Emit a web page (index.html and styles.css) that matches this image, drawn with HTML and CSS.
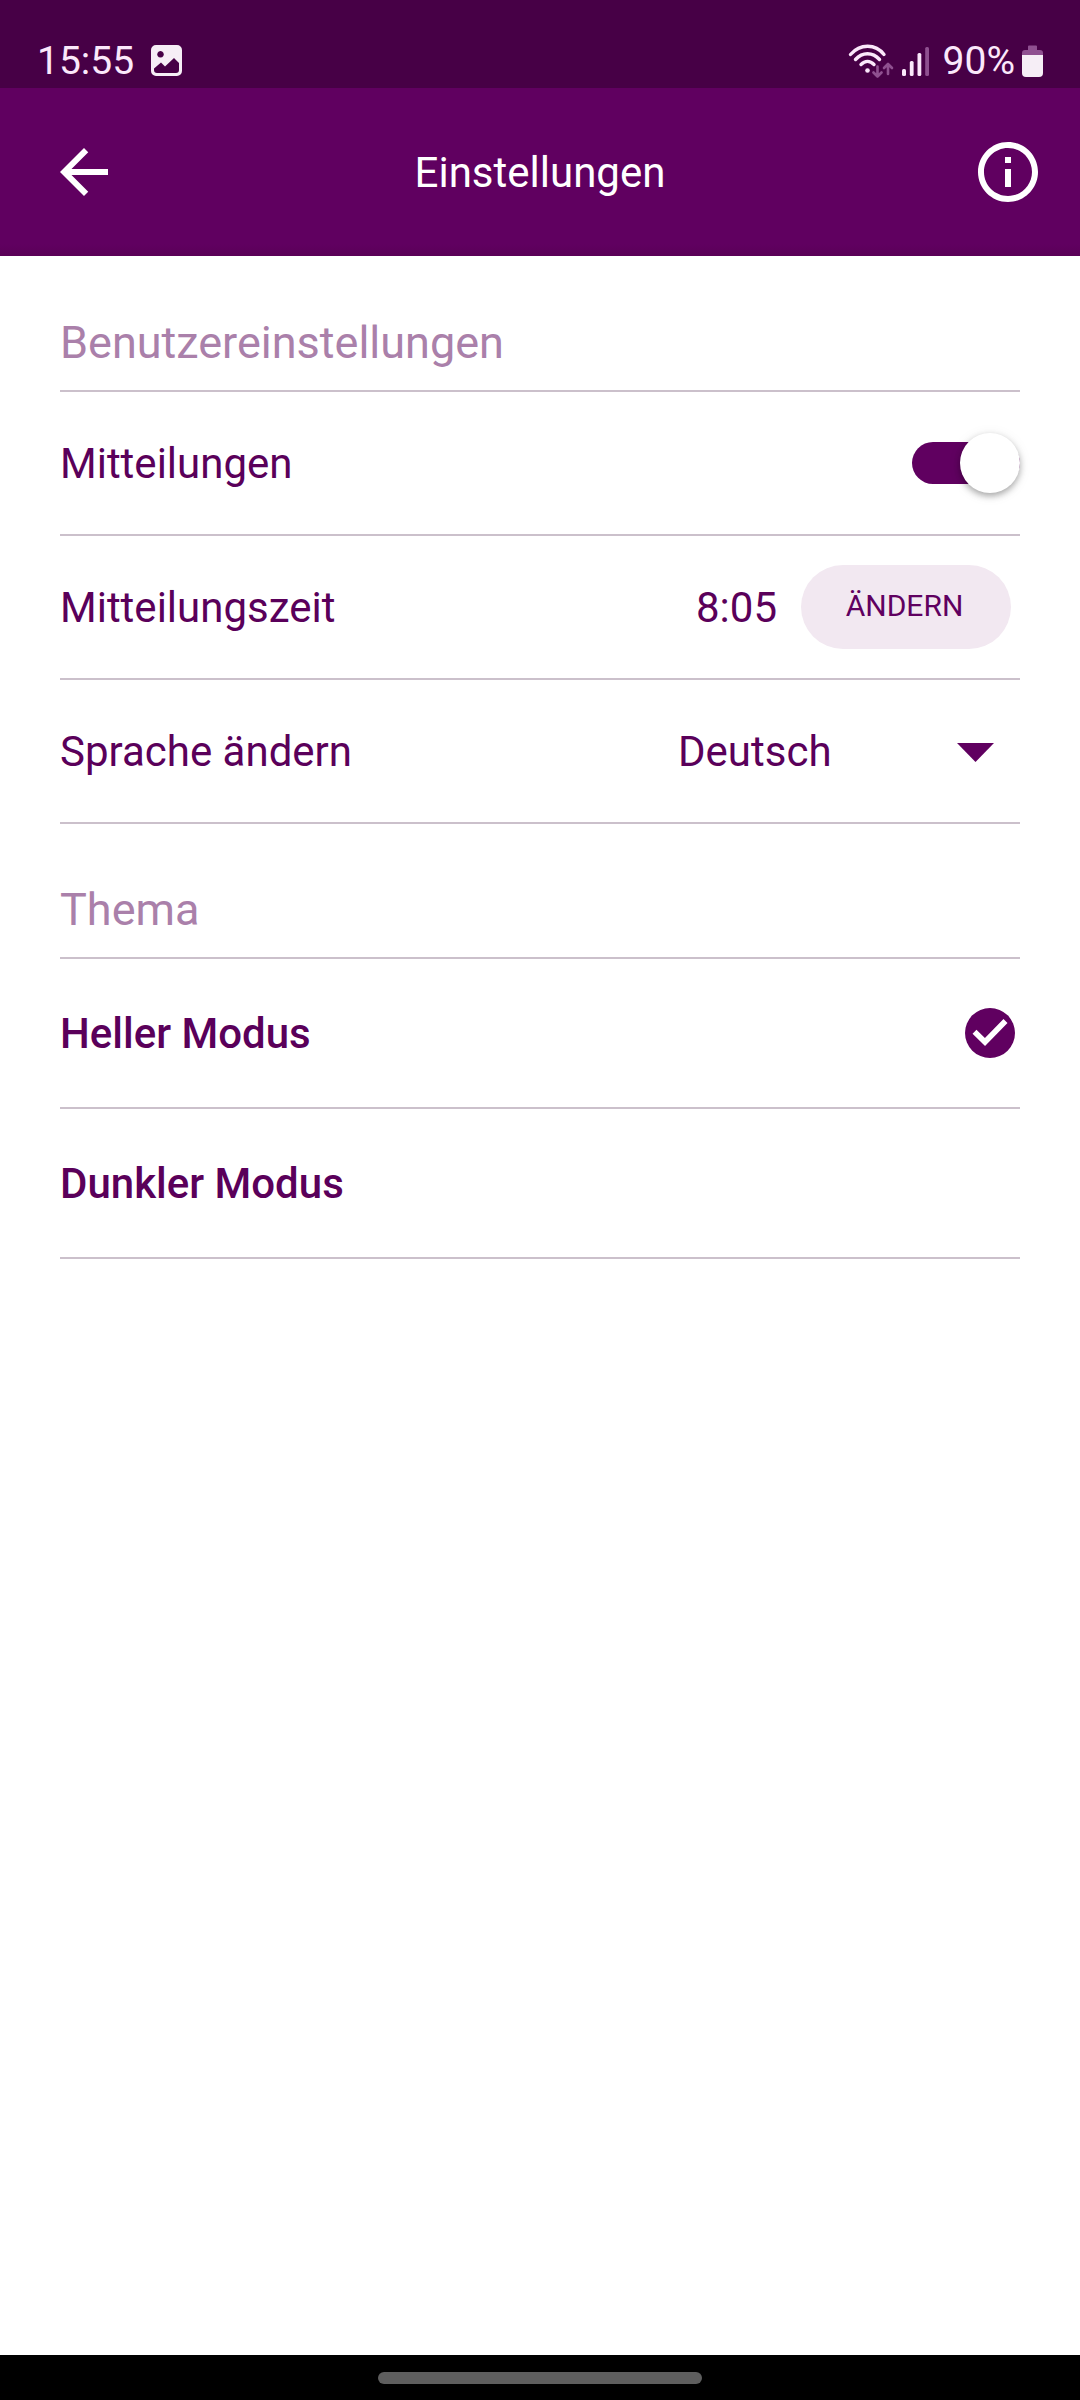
FILE: index.html
```html
<!DOCTYPE html>
<html lang="de">
<head>
    <meta charset="UTF-8">
    <meta name="viewport" content="width=device-width, initial-scale=1.0">
    <title>Einstellungen</title>
    <link rel="stylesheet" href="styles.css">
</head>
<body>

    <div class="statusbar">
        <span class="clock">15:55</span>
        <svg class="photo" viewBox="0 0 31 31">
            <path fill="#f6eef6" fill-rule="evenodd" d="M5 0h21a5 5 0 0 1 5 5v21a5 5 0 0 1-5 5H5a5 5 0 0 1-5-5V5a5 5 0 0 1 5-5zM9.500 6a3.300 3.300 0 1 0 .01 0zM3 23.500V25a3 3 0 0 0 3 3h19a3 3 0 0 0 3-3v-7l-5-5-9 8.500-4-4z"/>
        </svg>
        <div class="status-right">
            <svg class="wifi" viewBox="0 0 46 34">
                <g fill="none" stroke="#fbe8fb" stroke-width="3.400" stroke-linecap="round">
                    <path d="M2.500 10.500C12 -.5 27.500 -.5 36 10.500"/>
                    <path d="M7.500 15.500C14.500 7.800 24.500 7.800 31.500 15.500"/>
                    <path d="M13 20.500C17 16.500 22 16.500 26 20.500"/>
                </g>
                <circle cx="19.500" cy="26.500" r="2.300" fill="#fbe8fb"/>
                <g fill="none" stroke="#8f5090" stroke-width="2.600" stroke-linecap="round" stroke-linejoin="round">
                    <path d="M29.500 22.500v10M25.500 28.500l4 4 4-4"/>
                    <path d="M40 30V20M36 24l4-4 4 4"/>
                </g>
            </svg>
            <svg class="signal" viewBox="0 0 28 30">
                <g fill="#fbe8fb">
                    <rect x="0" y="23" width="4" height="7" rx="1.500"/>
                    <rect x="7.800" y="15" width="3.800" height="15" rx="1.500"/>
                    <rect x="15.500" y="7" width="3.800" height="23" rx="1.500"/>
                </g>
                <rect x="23.200" y="1" width="3.800" height="29" rx="1.500" fill="#8f5090"/>
            </svg>
            <span class="percent">90%</span>
            <svg class="battery" viewBox="0 0 21 32">
                <path fill="#8f5090" d="M6 1.500Q6 .5 7 .5h7q1 0 1 1V5h3q3 0 3 3v2H0V8q0-3 3-3h3z"/>
                <path fill="#f6eef6" d="M0 10h21v18q0 4-4 4H4q-4 0-4-4z"/>
            </svg>
        </div>
    </div>

    <header>
        <svg class="icon" viewBox="0 0 24 24" fill="#fff">
            <path d="M20 11H7.830l5.590-5.590L12 4l-8 8 8 8 1.410-1.410L7.830 13H20v-2z"/>
        </svg>
        <h1>Einstellungen</h1>
        <svg class="icon" viewBox="0 0 24 24" fill="#fff">
            <path d="M11 7h2v2h-2zm0 4h2v6h-2zm1-9C6.480 2 2 6.480 2 12s4.480 10 10 10 10-4.480 10-10S17.520 2 12 2zm0 18c-4.410 0-8-3.590-8-8s3.590-8 8-8 8 3.590 8 8-3.590 8-8 8z"/>
        </svg>
    </header>

    <main>
        <h2>Benutzereinstellungen</h2>
        <div class="row">
            <span>Mitteilungen</span>
            <div class="switch"><div class="thumb"></div></div>
        </div>
        <div class="row">
            <span>Mitteilungszeit</span>
            <div class="time">
                <span>8:05</span>
                <button>ÄNDERN</button>
            </div>
        </div>
        <div class="row">
            <span>Sprache ändern</span>
            <div class="select">
                <span>Deutsch</span>
                <svg class="caret" viewBox="0 0 37 19"><path fill="#600060" d="M0 0h37L18.500 19z"/></svg>
            </div>
        </div>

        <h2 class="theme">Thema</h2>
        <div class="row mode">
            <span>Heller Modus</span>
            <svg class="check" viewBox="0 0 50 50">
                <circle cx="25" cy="25" r="25" fill="#600060"/>
                <path d="M9.500 23.700L20 34 40.500 13" fill="none" stroke="#fff" stroke-width="5.600"/>
            </svg>
        </div>
        <div class="row mode">
            <span>Dunkler Modus</span>
        </div>
    </main>

    <div class="navbar"><div class="pill"></div></div>

</body>
</html>
```
FILE: styles.css
```css
* {
    box-sizing: border-box;
}
body {
    font-family: Roboto, sans-serif;
    font-size: 42px;
    background-color: #fff;
    color: #5a005a;
    display: flex;
    flex-direction: column;
    height: 2400px;
    margin: 0;
}
svg {
    display: block;
    flex-shrink: 0;
}
.statusbar {
    display: flex;
    align-items: center;
    height: 88px;
    padding: 33px 37px 0 37px;
    background-color: #470046;
    color: #fbe8fb;
    font-size: 39px;
    line-height: 55px;
}
.clock, .percent {
    padding-top: 1px;
}
.photo {
    width: 31px;
    height: 31px;
    margin-left: 17px;
}
.status-right {
    display: flex;
    align-items: center;
    margin-left: auto;
}
.wifi {
    width: 46px;
    height: 34px;
}
.signal {
    width: 28px;
    height: 30px;
    margin-left: 8px;
}
.percent {
    margin-left: 13px;
}
.battery {
    width: 21px;
    height: 32px;
    margin-left: 7px;
}
header {
    display: flex;
    align-items: center;
    height: 168px;
    padding: 0 36px 0 48px;
    background: linear-gradient(#600060 93%, #5a0057);
    color: #fff;
}
.icon {
    width: 72px;
    height: 72px;
}
h1 {
    flex: 1;
    margin: 0 0 0 -12px;
    font-size: 42px;
    font-weight: 400;
    text-align: center;
}
main {
    flex: 1;
    padding: 0 60px;
}
h2 {
    display: flex;
    align-items: flex-end;
    height: 136px;
    margin: 0;
    padding-bottom: 21px;
    border-bottom: 2px solid #cbc0cb;
    color: #aa80aa;
    font-size: 45px;
    font-weight: 400;
    line-height: 53px;
}
.theme {
    height: 135px;
}
.row {
    display: flex;
    align-items: center;
    justify-content: space-between;
    height: 144px;
    border-bottom: 2px solid #cbc0cb;
}
.mode {
    height: 150px;
    font-weight: 500;
}
.switch {
    display: flex;
    align-items: center;
    justify-content: flex-end;
    width: 108px;
    height: 42px;
    border-radius: 21px;
    background-color: #600060;
}
.thumb {
    flex-shrink: 0;
    width: 60px;
    height: 60px;
    border-radius: 50%;
    background-color: #fff;
    box-shadow: 0 3px 6px rgba(0, 0, 0, 0.3), 0 2px 14px rgba(0, 0, 0, 0.08);
}
.time {
    display: flex;
    align-items: center;
    gap: 24px;
    padding-right: 9px;
}
button {
    width: 210px;
    height: 84px;
    padding: 0 3px 4px 0;
    border: none;
    border-radius: 42px;
    background-color: #f2e8f1;
    color: #600060;
    font-family: inherit;
    font-size: 30px;
}
.select {
    display: flex;
    align-items: center;
    justify-content: space-between;
    width: 342px;
    padding-right: 26px;
}
.caret {
    width: 37px;
    height: 19px;
    margin-top: 2px;
}
.check {
    width: 50px;
    height: 50px;
    margin-right: 5px;
}
.navbar {
    display: flex;
    justify-content: center;
    height: 45px;
    padding-top: 17px;
    background-color: #000;
}
.pill {
    width: 324px;
    height: 12px;
    border-radius: 6px;
    background-color: #5e5e5e;
}
```
